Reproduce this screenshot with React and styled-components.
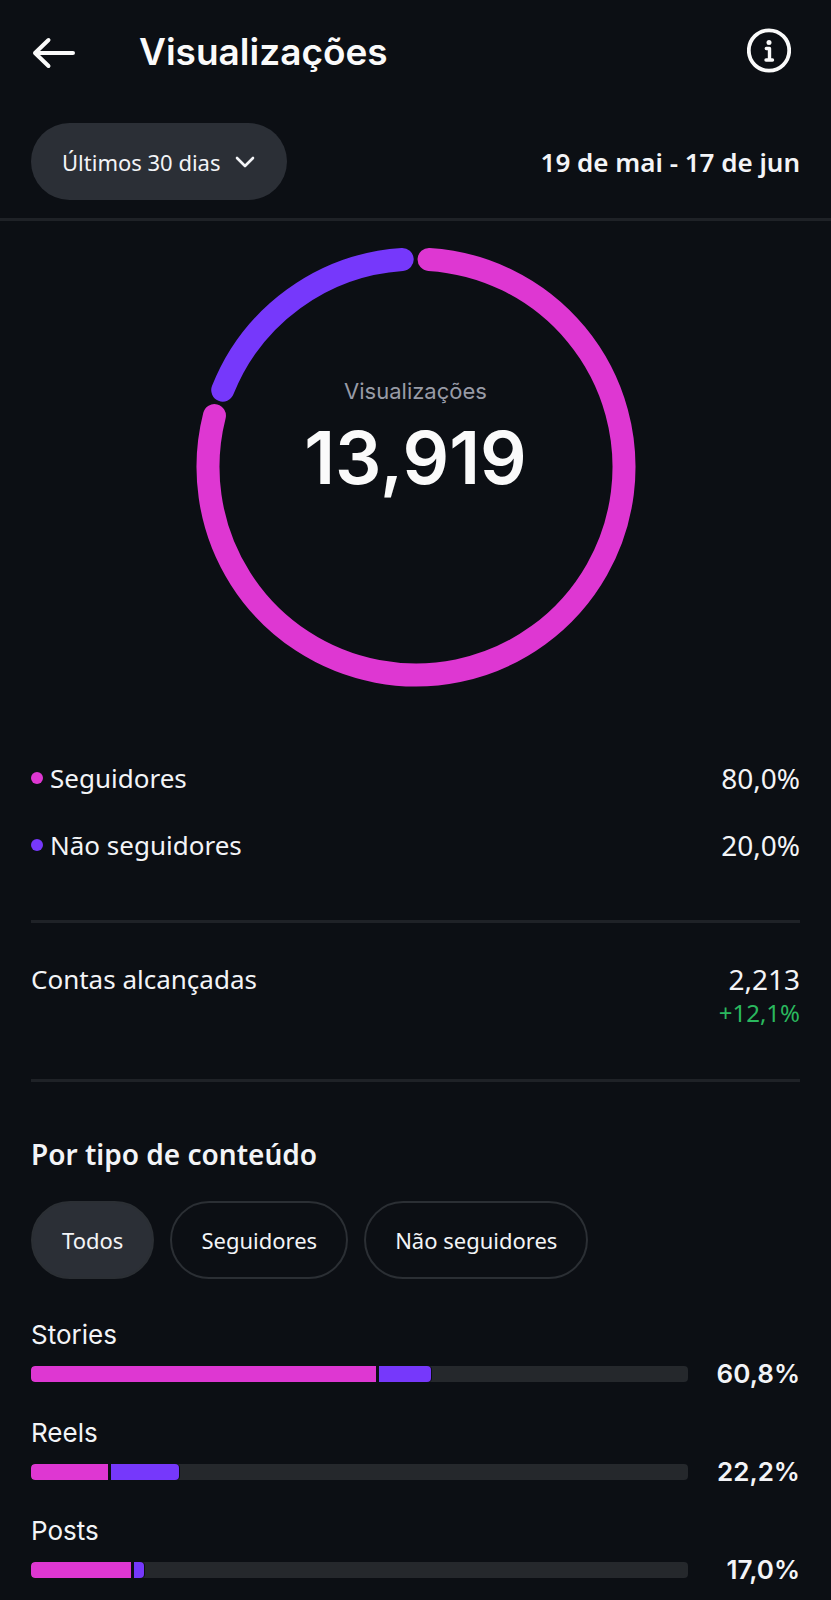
import { useState } from 'react';
import styled, { createGlobalStyle } from 'styled-components';

const PINK = '#de37d2';
const PURPLE = '#7638fb';

const GlobalStyle = createGlobalStyle`
  * {
    box-sizing: border-box;
  }

  body {
    margin: 0;
    background: #0c0f14;
    color: #f3f4f7;
    font-family: 'Noto Sans', sans-serif;
  }

  button,
  select {
    font-family: inherit;
    color: inherit;
    cursor: pointer;
  }
`;

const Header = styled.header`
  display: flex;
  align-items: center;
  height: 104px;
  padding: 0 40px 0 32px;

  & h1 {
    flex: 1;
    margin: 0 0 0 63px;
    color: #fafafa;
    font-family: Inter, sans-serif;
    font-size: 37px;
    font-weight: 600;
    line-height: 48px;
  }
`;

const IconButton = styled.button`
  display: flex;
  padding: 0;
  border: none;
  background: none;
`;

const Toolbar = styled.div`
  display: flex;
  justify-content: space-between;
  align-items: center;
  padding: 19px 31px 18px;
  border-bottom: 3px solid #1f2227;
`;

const PeriodPicker = styled.div`
  position: relative;

  & select {
    height: 77px;
    padding: 0 66px 0 31px;
    border: none;
    border-radius: 39px;
    background: #2b2f36;
    appearance: none;
    font-size: 22px;
  }

  & svg {
    position: absolute;
    top: 32px;
    right: 32px;
    pointer-events: none;
  }
`;

const DateRange = styled.p`
  margin: 0;
  font-size: 26px;
  font-weight: 600;
  line-height: 34px;
`;

const Content = styled.main`
  padding: 26px 31px 13px;
`;

const Chart = styled.figure`
  display: grid;
  justify-items: center;
  margin: 0 0 57px;

  & > * {
    grid-area: 1 / 1;
  }

  & svg {
    width: 100%;
    max-width: 440px;
  }
`;

const ChartLabel = styled.figcaption`
  padding-top: 128px;
  text-align: center;
  font-family: Inter, sans-serif;

  & span {
    display: block;
    color: #989ba6;
    font-size: 22px;
    line-height: 32px;
  }

  & strong {
    display: block;
    color: #fafafa;
    font-size: 73px;
    font-weight: 600;
    line-height: 102px;
  }
`;

const Section = styled.section`
  padding-bottom: ${({ $bottom }) => $bottom}px;
  border-bottom: 3px solid #1f2227;
`;

const LegendRow = styled.div`
  display: flex;
  align-items: center;
  height: 67px;
  font-size: 26px;
  line-height: 34px;
`;

const Dot = styled.i`
  width: 12px;
  height: 12px;
  margin-right: 7px;
  border-radius: 50%;
  background: ${({ $color }) => $color};
`;

const Value = styled.div`
  margin-left: auto;
  font-size: 28px;
  text-align: right;
`;

const Reach = styled.div`
  display: flex;
  padding-top: 39px;
  font-size: 26px;
  line-height: 34px;
`;

const Growth = styled.div`
  color: #2ab85e;
  font-size: 24px;
`;

const SectionTitle = styled.h2`
  margin: 52px 0 27px;
  font-size: 28px;
  font-weight: 600;
  line-height: 40px;
`;

const Filters = styled.div`
  display: flex;
  flex-wrap: wrap;
  gap: 16px;
  margin-bottom: 39px;
`;

const FilterButton = styled.button`
  height: 78px;
  padding: 0 29px;
  border: 2px solid #2b2f34;
  border-radius: 39px;
  background: ${({ $active }) => ($active ? '#2b2f36' : 'transparent')};
  font-size: 22px;
`;

const TypeList = styled.div`
  display: flex;
  flex-direction: column;
  gap: 25px;
  font-family: Inter, sans-serif;
  font-size: 26px;
  line-height: 34px;
`;

const TypeRow = styled.div`
  display: grid;
  grid-template-columns: 1fr 112px;
  row-gap: 5px;
  align-items: center;

  & span {
    grid-column: 1 / -1;
  }

  & strong {
    font-weight: 600;
    text-align: right;
  }
`;

const Track = styled.div`
  display: flex;
  height: 16px;
  border-radius: 4px;
  background: #25282c;
  overflow: hidden;
`;

const Bar = styled.div`
  background: ${({ $color }) => $color};
  border-radius: ${({ $end }) => ($end ? '0 4px 4px 0' : '4px 0 0 4px')};
  box-shadow: 1px 0 0 #0c0f14;
`;

const Gap = styled.div`
  width: 3px;
  background: #0c0f14;
`;

const periods = ['Últimos 7 dias', 'Últimos 30 dias', 'Últimos 90 dias'];

const legend = [
  { label: 'Seguidores', value: '80,0%', color: PINK },
  { label: 'Não seguidores', value: '20,0%', color: PURPLE },
];

const filters = ['Todos', 'Seguidores', 'Não seguidores'];

const types = [
  { name: 'Stories', total: '60,8%', followers: 52.5, others: 7.9 },
  { name: 'Reels', total: '22,2%', followers: 11.7, others: 10.3 },
  { name: 'Posts', total: '17,0%', followers: 15.2, others: 1.6 },
];

// angles in degrees, clockwise from the top of the ring
function arc(start, end) {
  const point = (deg) => {
    const rad = (deg * Math.PI) / 180;
    return `${220 + 208 * Math.sin(rad)} ${220 - 208 * Math.cos(rad)}`;
  };
  const large = end - start > 180 ? 1 : 0;
  return `M ${point(start)} A 208 208 0 ${large} 1 ${point(end)}`;
}

const App = () => {
  const [period, setPeriod] = useState(periods[1]);
  const [filter, setFilter] = useState('Todos');

  return (
    <>
      <GlobalStyle />
      <Header>
        <IconButton type="button" aria-label="Voltar">
          <svg
            width="44"
            height="44"
            viewBox="0 0 44 44"
            fill="none"
            stroke="#fafafa"
            strokeWidth="4"
            strokeLinecap="round"
            strokeLinejoin="round"
          >
            <path d="M16.500 10 L3 23 L16.500 36 M3 23 H41" />
          </svg>
        </IconButton>
        <h1>Visualizações</h1>
        <IconButton type="button" aria-label="Informações">
          <svg
            width="44"
            height="48"
            viewBox="0 0 44 48"
            fill="none"
            stroke="#fafafa"
            strokeLinecap="round"
            strokeLinejoin="round"
          >
            <circle cx="22" cy="22.500" r="20.200" strokeWidth="3.800" />
            <path d="M19.300 20.500 H22.500 V32 M19 32 H25.500" strokeWidth="3.400" />
            <circle cx="22" cy="14.500" r="2.500" fill="#fafafa" stroke="none" />
          </svg>
        </IconButton>
      </Header>

      <Toolbar>
        <PeriodPicker>
          <select
            aria-label="Período"
            value={period}
            onChange={(e) => setPeriod(e.target.value)}
          >
            {periods.map((item) => (
              <option key={item}>{item}</option>
            ))}
          </select>
          <svg
            width="20"
            height="14"
            viewBox="0 0 20 14"
            fill="none"
            stroke="#f3f4f7"
            strokeWidth="2.600"
            strokeLinecap="round"
            strokeLinejoin="round"
          >
            <path d="M2 3 L10 11 L18 3" />
          </svg>
        </PeriodPicker>
        <DateRange>19 de mai - 17 de jun</DateRange>
      </Toolbar>

      <Content>
        <Chart>
          <svg viewBox="0 0 440 440" fill="none" strokeWidth="23" strokeLinecap="round">
            <path d={arc(3.6, 284.3)} stroke={PINK} />
            <path d={arc(291.7, 356.2)} stroke={PURPLE} />
          </svg>
          <ChartLabel>
            <span>Visualizações</span>
            <strong>13,919</strong>
          </ChartLabel>
        </Chart>

        <Section $bottom={42}>
          {legend.map((item) => (
            <LegendRow key={item.label}>
              <Dot $color={item.color} />
              <span>{item.label}</span>
              <Value>{item.value}</Value>
            </LegendRow>
          ))}
        </Section>

        <Section $bottom={49}>
          <Reach>
            <span>Contas alcançadas</span>
            <Value>
              2,213
              <Growth>+12,1%</Growth>
            </Value>
          </Reach>
        </Section>

        <SectionTitle>Por tipo de conteúdo</SectionTitle>
        <Filters>
          {filters.map((item) => (
            <FilterButton
              key={item}
              type="button"
              $active={item === filter}
              aria-pressed={item === filter}
              onClick={() => setFilter(item)}
            >
              {item}
            </FilterButton>
          ))}
        </Filters>

        <TypeList>
          {types.map((item) => (
            <TypeRow key={item.name}>
              <span>{item.name}</span>
              <Track>
                <Bar $color={PINK} style={{ width: `${item.followers}%` }} />
                <Gap />
                <Bar $color={PURPLE} $end style={{ width: `${item.others}%` }} />
              </Track>
              <strong>{item.total}</strong>
            </TypeRow>
          ))}
        </TypeList>
      </Content>
    </>
  );
};

export default App;
